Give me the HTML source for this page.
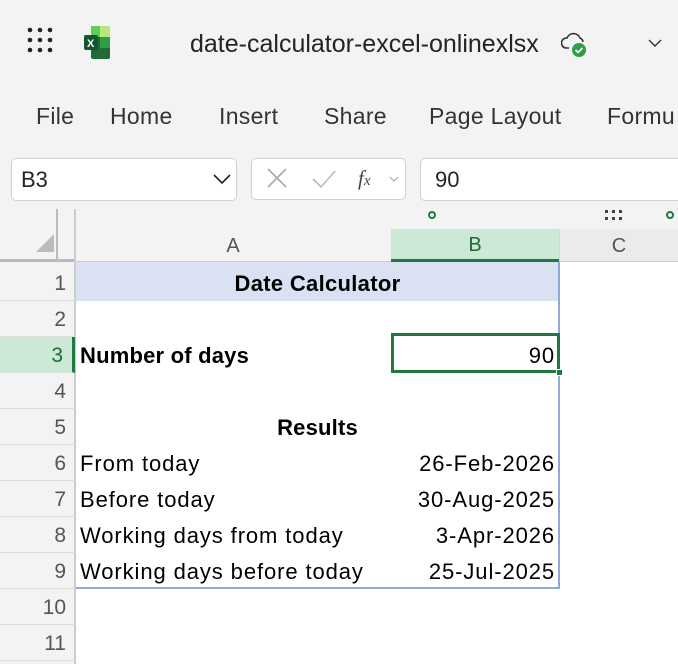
<!DOCTYPE html>
<html><head><meta charset="utf-8"><style>
*{margin:0;padding:0;box-sizing:border-box}
body{width:678px;height:664px;overflow:hidden;background:#f3f3f3;font-family:"Liberation Sans",sans-serif;position:relative;color:#242424}
.a{position:absolute}
.tab{position:absolute;top:103px;font-size:23px;color:#333;letter-spacing:0.3px}
.rh{position:absolute;left:0;width:75px;height:36px;text-align:right;padding-right:9px;font-size:21px;color:#555;border-bottom:1px solid #dcdcdc;line-height:38px}
.c{position:absolute;font-size:22px;color:#000;line-height:38px;height:36px;white-space:nowrap;letter-spacing:0.9px}
</style></head><body>
<svg class="a" style="left:27px;top:27px" width="30" height="30"><g fill="#222">
<circle cx="3" cy="3" r="2.3"/><circle cx="13" cy="3" r="2.3"/><circle cx="23" cy="3" r="2.3"/>
<circle cx="3" cy="13" r="2.3"/><circle cx="13" cy="13" r="2.3"/><circle cx="23" cy="13" r="2.3"/>
<circle cx="3" cy="23" r="2.3"/><circle cx="13" cy="23" r="2.3"/><circle cx="23" cy="23" r="2.3"/></g></svg>
<svg class="a" style="left:84px;top:25px" width="36" height="35">
<rect x="7" y="1" width="19" height="33" rx="2" fill="#1e6b35"/>
<rect x="16" y="1" width="10" height="11" fill="#b9e87a"/>
<rect x="7" y="1" width="9" height="11" fill="#5ccf5a"/>
<rect x="16" y="12" width="10" height="11" fill="#2e9e45"/>
<rect x="0" y="10" width="14" height="15" rx="2" fill="#14572c"/>
<text x="3" y="22" font-size="11" font-weight="bold" fill="#fff" font-family="Liberation Sans">X</text></svg>
<div class="a" style="left:190px;top:30px;font-size:25px;color:#242424">date-calculator-excel-onlinexlsx</div>
<svg class="a" style="left:561px;top:30px" width="30" height="30"><path d="M8 18 H5 A5 5 0 0 1 6 8 A7 7 0 0 1 19 8 A5 5 0 0 1 22 12" fill="none" stroke="#333" stroke-width="1.6"/><circle cx="18" cy="20" r="7" fill="#2f9e44"/><path d="M14.5 20 l2.5 2.5 l4.5-4.5" stroke="#fff" stroke-width="1.6" fill="none"/></svg>
<svg class="a" style="left:648px;top:38px" width="14" height="10"><path d="M1 2 l6 6 l6-6" stroke="#333" stroke-width="1.4" fill="none"/></svg>
<div class="tab" style="left:36px">File</div>
<div class="tab" style="left:110px">Home</div>
<div class="tab" style="left:219px">Insert</div>
<div class="tab" style="left:324px">Share</div>
<div class="tab" style="left:429px">Page Layout</div>
<div class="tab" style="left:607px">Formu</div>
<div class="a" style="left:11px;top:158px;width:226px;height:43px;background:#fff;border:1px solid #d0d0d0;border-radius:5px"></div>
<div class="a" style="left:21px;top:167px;font-size:22px">B3</div>
<svg class="a" style="left:213px;top:173px" width="18" height="12"><path d="M1 2 l8 8 l8-8" stroke="#222" stroke-width="1.6" fill="none"/></svg>
<div class="a" style="left:251px;top:158px;width:155px;height:42px;background:#fff;border:1px solid #d0d0d0;border-radius:5px"></div>
<svg class="a" style="left:265px;top:167px" width="28" height="24"><path d="M3 2 L21 20 M21 2 L3 20" stroke="#aaa" stroke-width="1.6"/></svg>
<svg class="a" style="left:310px;top:167px" width="34" height="24"><path d="M3 12 l8 8 l14-16" stroke="#bbb" stroke-width="1.6" fill="none"/></svg>
<div class="a" style="left:358px;top:166px;font-size:21px;font-style:italic;font-family:'Liberation Serif',serif;color:#444">f<span style="font-size:15px">x</span></div>
<svg class="a" style="left:389px;top:176px" width="10" height="8"><path d="M1 1 l4 4 l4-4" stroke="#aaa" stroke-width="1.2" fill="none"/></svg>
<div class="a" style="left:420px;top:158px;width:270px;height:43px;background:#fff;border:1px solid #d0d0d0;border-radius:5px"></div>
<div class="a" style="left:435px;top:167px;font-size:22px">90</div>
<div class="a" style="left:428px;top:211px;width:8px;height:8px;border:2px solid #1e7a3e;border-radius:50%"></div>
<div class="a" style="left:666px;top:211px;width:8px;height:8px;border:2px solid #1e7a3e;border-radius:50%"></div>
<svg class="a" style="left:605px;top:210px" width="20" height="12"><g fill="#444"><rect x="0" y="0" width="3" height="3"/><rect x="7" y="0" width="3" height="3"/><rect x="14" y="0" width="3" height="3"/><rect x="0" y="7" width="3" height="3"/><rect x="7" y="7" width="3" height="3"/><rect x="14" y="7" width="3" height="3"/></g></svg>
<div class="a" style="left:56px;top:209px;width:2px;height:53px;background:#bbb"></div>
<svg class="a" style="left:36px;top:234px" width="20" height="20"><path d="M18 0 L18 18 L0 18 Z" fill="#bbb"/></svg>
<div class="a" style="left:0;top:259px;width:75px;height:3px;background:#bbb"></div>
<div class="a" style="left:75px;top:229px;width:316px;height:33px;border-bottom:1px solid #ccc;text-align:center;font-size:20px;color:#555;line-height:35px">A</div>
<div class="a" style="left:391px;top:229px;width:168px;height:33px;background:#cbe9d6;border-bottom:3px solid #1e7a3e;text-align:center;font-size:20px;color:#1e6b35;line-height:33px">B</div>
<div class="a" style="left:559px;top:229px;width:119px;height:33px;background:#ebebeb;border-left:1px solid #d6d6d6;border-bottom:1px solid #ccc;text-align:center;font-size:20px;color:#555;line-height:35px">C</div>
<div class="a" style="left:74px;top:209px;width:2px;height:455px;background:#ccc"></div>
<div class="a" style="left:76px;top:262px;width:602px;height:402px;background:#fff"></div>
<div class="a" style="left:76px;top:262px;width:483px;height:39px;background:#d9e1f2"></div>
<div class="a" style="left:558px;top:262px;width:2px;height:327px;background:#8eaadb"></div>
<div class="a" style="left:76px;top:587px;width:484px;height:2px;background:#8eaadb"></div>
<div class="rh" style="top:262px;height:39px;line-height:43px">1</div>
<div class="rh" style="top:301px">2</div>
<div class="rh" style="top:337px;background:#cbe9d6;color:#1e6b35;border-right:3px solid #1e7a3e">3</div>
<div class="rh" style="top:373px">4</div>
<div class="rh" style="top:409px">5</div>
<div class="rh" style="top:445px">6</div>
<div class="rh" style="top:481px">7</div>
<div class="rh" style="top:517px">8</div>
<div class="rh" style="top:553px">9</div>
<div class="rh" style="top:589px">10</div>
<div class="rh" style="top:625px">11</div>
<div class="c" style="left:76px;top:265px;width:483px;text-align:center;font-weight:bold;letter-spacing:0.3px">Date Calculator</div>
<div class="c" style="left:80px;top:337px;font-weight:bold;letter-spacing:0.2px">Number of days</div>
<div class="a" style="left:391px;top:333px;width:169px;height:40px;border:3px solid #1e7a3e"></div>
<div class="a" style="left:556px;top:369px;width:7px;height:7px;background:#1e7a3e;border:1px solid #fff"></div>
<div class="c" style="left:391px;top:337px;width:164px;text-align:right">90</div>
<div class="c" style="left:76px;top:409px;width:483px;text-align:center;font-weight:bold;letter-spacing:0.2px">Results</div>
<div class="c" style="left:80px;top:445px">From today</div>
<div class="c" style="left:80px;top:481px">Before today</div>
<div class="c" style="left:80px;top:517px">Working days from today</div>
<div class="c" style="left:80px;top:553px">Working days before today</div>
<div class="c" style="left:391px;top:445px;width:164px;text-align:right">26-Feb-2026</div>
<div class="c" style="left:391px;top:481px;width:164px;text-align:right">30-Aug-2025</div>
<div class="c" style="left:391px;top:517px;width:164px;text-align:right">3-Apr-2026</div>
<div class="c" style="left:391px;top:553px;width:164px;text-align:right">25-Jul-2025</div>
</body></html>
